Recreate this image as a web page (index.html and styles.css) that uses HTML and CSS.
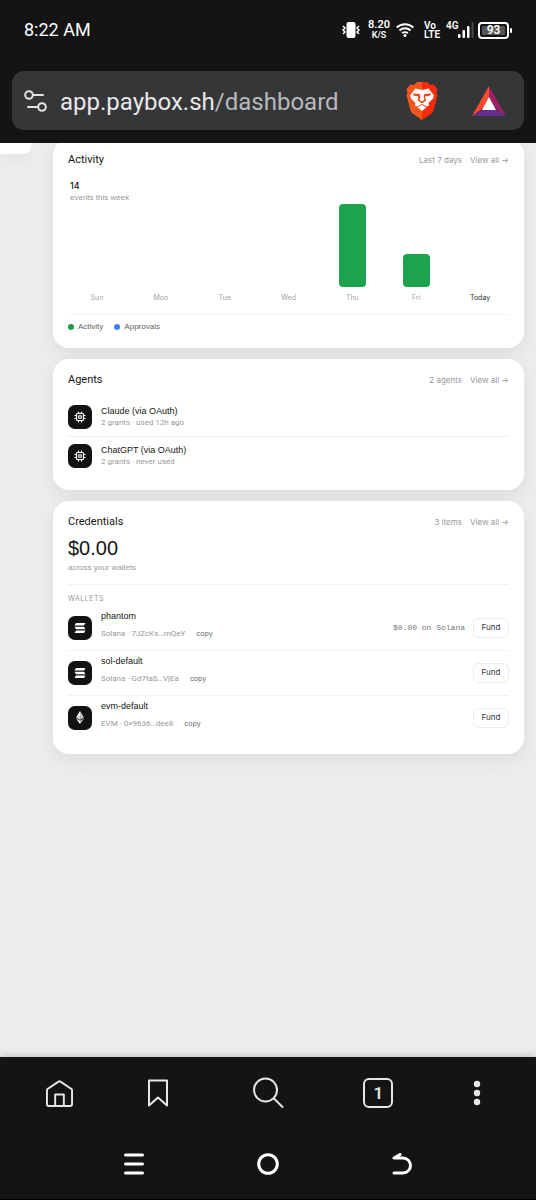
FILE: index.html
```html
<!DOCTYPE html>
<html lang="en">
<head>
<meta charset="utf-8">
<meta name="viewport" content="width=device-width, initial-scale=1">
<title>Paybox dashboard</title>
<link rel="stylesheet" href="styles.css">
</head>
<body>
<svg class="defs" aria-hidden="true">
  <symbol id="chip" viewBox="0 0 24 24"><g fill="none" stroke="#fff" stroke-width="2.4" stroke-linecap="round"><rect x="5" y="5" width="14" height="14" rx="2.5"/><rect x="9.5" y="9.5" width="5" height="5" rx=".5"/><path d="M9 5V2M15 5V2M9 22v-3M15 22v-3M5 9H2M5 15H2M22 9h-3M22 15h-3"/></g></symbol>
  <symbol id="sol" viewBox="0 0 24 20"><path fill="#fff" d="M4 0h19l-3 5H1zM1 7.500h19l3 5H4zM4 15h19l-3 5H1z"/></symbol>
  <symbol id="eth" viewBox="0 0 16 26"><path fill="#fff" d="M8 0 8 17.500 0 13zM8 19.500V26L0 15z"/><path fill="#c9c9c9" d="M8 0v17.500L16 13zM8 19.500V26l8-11z"/><path fill="#999" d="m0 13 8-3.500v8zM8 9.500l8 3.500-8 4.500z" opacity=".4"/></symbol>
</svg>
<header class="top">
  <div class="status">
    <span class="time">8:22 AM</span>
    <div class="signals">
      <svg class="vibrate" width="18" height="16" viewBox="0 0 18 16"><rect x="4.500" y="0" width="9" height="16" rx="2" fill="#fff"/><path d="M1 4l2 2-2 2 2 2-2 2M17 4l-2 2 2 2-2 2 2 2" fill="none" stroke="#fff" stroke-width="1.500"/></svg>
      <span class="speed"><b>8.20</b><b class="unit">K/S</b></span>
      <svg class="wifi" width="18" height="14" viewBox="0 0 18 14"><g fill="none" stroke="#fff" stroke-width="2"><path d="M.7 4.500a12 12 0 0 1 16.600 0M3.500 7.500a8 8 0 0 1 11 0M6.200 10.300a4 4 0 0 1 5.600 0"/></g><circle cx="9" cy="12.500" r="1.500" fill="#fff"/></svg>
      <span class="volte"><b>Vo</b><b>LTE</b></span>
      <b class="gen">4G</b>
      <svg class="bars" width="16" height="16" viewBox="0 0 16 16"><g fill="#fff"><rect y="12" width="2.500" height="4" rx="1"/><rect x="4.500" y="8" width="2.500" height="8" rx="1"/><rect x="9" y="4" width="2.500" height="12" rx="1"/></g><rect x="13.500" width="2" height="16" rx="1" fill="#48484a"/></svg>
      <span class="battery"><b>93</b></span>
    </div>
  </div>
  <div class="address">
    <svg width="24" height="22" viewBox="0 0 24 22"><g fill="none" stroke="#e3e3e4" stroke-width="2" stroke-linecap="round"><circle cx="5" cy="5" r="3.800"/><path d="M9 5h10M4 17h10"/><circle cx="18" cy="17" r="3.800"/></g></svg>
    <span class="url">app.paybox.sh<span class="path">/dashboard</span></span>
    <svg class="brave" width="32" height="38" viewBox="0 0 32 38"><defs><linearGradient id="lion"><stop offset=".5" stop-color="#f4561d"/><stop offset=".5" stop-color="#fb2b0a"/></linearGradient></defs><path fill="url(#lion)" d="M11 0h10l3 3 3.500-.5L31.500 7l-1 3.500 1 3-4 15c-1 3-3 3.500-5 5L16 38l-6.500-4.500c-2-1.500-4-2-5-5l-4-15 1-3-1-3.500 4-4.500L8 3z"/><path fill="#fff" d="m9.500 6.500 4 1q2.500.7 5 0l4-1 5.500 7-1 3-4.500 4.500.5 2.500-2 1-5-2.500-5 2.500-2-1 .5-2.500L5 16.500l-1-3z"/><g fill="#f8431a"><path d="m7 11.500 7 .5-1.500 2.500-5-1zM25 11.500l-7 .5 1.500 2.500 5-1z"/><path d="m12.500 13 1.500-.5.3 2.500-.8 3 2.500 1.600 2.500-1.600-.8-3 .3-2.500 1.500.5-.5 2 1.200 3.500L16 21.500l-4.200-3z"/></g><path fill="#fff" d="m16 23 4.500 2.200L16 29l-4.500-3.800z"/></svg>
    <svg class="bat" width="34" height="30" viewBox="0 0 34 30"><path fill="#ff4b2b" d="M17 0v11l-6 11-11 8z"/><path fill="#9e1f63" d="m17 0 17 30-11-8-6-11z"/><path fill="#662d91" d="m0 30 11-6.500h12L34 30z"/><path fill="#fff" d="m17 11 7 13H10z"/></svg>
  </div>
</header>

<div class="page">
  <aside class="side"></aside>
  <main class="cards">
    <section class="card">
      <div class="head"><h2>Activity</h2><span class="meta">Last 7 days</span><a class="all" href="#">View all →</a></div>
      <div class="total"><strong>14</strong><span>events this week</span></div>
      <div class="chart">
        <div class="day"><i class="bar" style="height:0"></i><span>Sun</span></div>
        <div class="day"><i class="bar" style="height:0"></i><span>Mon</span></div>
        <div class="day"><i class="bar" style="height:0"></i><span>Tue</span></div>
        <div class="day"><i class="bar" style="height:0"></i><span>Wed</span></div>
        <div class="day"><i class="bar" style="height:83px"></i><span>Thu</span></div>
        <div class="day"><i class="bar" style="height:33px"></i><span>Fri</span></div>
        <div class="day today"><i class="bar" style="height:0"></i><span>Today</span></div>
      </div>
      <div class="legend"><span class="key">Activity</span><span class="key blue">Approvals</span></div>
    </section>

    <section class="card">
      <div class="head"><h2>Agents</h2><span class="meta">2 agents</span><a class="all" href="#">View all →</a></div>
      <ul class="agents">
        <li class="row"><span class="tile"><svg width="12" height="12"><use href="#chip"/></svg></span><div class="info"><span class="name">Claude (via OAuth)</span><span class="sub">2 grants · used 12h ago</span></div></li>
        <li class="row"><span class="tile"><svg width="12" height="12"><use href="#chip"/></svg></span><div class="info"><span class="name">ChatGPT (via OAuth)</span><span class="sub">2 grants · never used</span></div></li>
      </ul>
    </section>

    <section class="card">
      <div class="head"><h2>Credentials</h2><span class="meta">3 items</span><a class="all" href="#">View all →</a></div>
      <div class="balance">$0.00</div>
      <div class="across">across your wallets</div>
      <h3>WALLETS</h3>
      <ul class="wallets">
        <li class="row"><span class="tile"><svg width="12" height="10"><use href="#sol"/></svg></span><div class="info"><span class="name">phantom</span><span class="sub">Solana · 7JZcKs…mQeY <button class="copy">copy</button></span></div><span class="amount">$0.00 on Solana</span><button class="fund">Fund</button></li>
        <li class="row"><span class="tile"><svg width="12" height="10"><use href="#sol"/></svg></span><div class="info"><span class="name">sol-default</span><span class="sub">Solana · Gd7taS…VjEa <button class="copy">copy</button></span></div><button class="fund">Fund</button></li>
        <li class="row"><span class="tile"><svg width="8" height="13"><use href="#eth"/></svg></span><div class="info"><span class="name">evm-default</span><span class="sub">EVM · 0×9636…dee8 <button class="copy">copy</button></span></div><button class="fund">Fund</button></li>
      </ul>
    </section>
  </main>
</div>

<footer class="bottom">
  <nav class="tools">
    <button aria-label="Home"><svg width="27" height="27" viewBox="0 0 28 28"><path d="M1 10.500Q1 9.500 2 9L13 1.700Q14 1 15 1.700L26 9q1 .5 1 1.500V25q0 2-2 2H3q-2 0-2-2zM9.500 27V15h9v12"/></svg></button>
    <button aria-label="Bookmarks"><svg width="20" height="28" viewBox="0 0 20 28"><path d="M1 1.500h18v25l-9-8-9 8z"/></svg></button>
    <button aria-label="Search"><svg width="32" height="32" viewBox="0 0 32 32"><circle cx="13.500" cy="13" r="11.500"/><path d="m22 21.500 8.500 8.500"/></svg></button>
    <button class="tabs" aria-label="Tabs"><span>1</span></button>
    <button aria-label="Menu"><svg class="dots" width="8" height="26" viewBox="0 0 8 26"><circle cx="4" cy="4" r="3.200"/><circle cx="4" cy="13" r="3.200"/><circle cx="4" cy="22" r="3.200"/></svg></button>
  </nav>
  <nav class="system">
    <button aria-label="Recent apps"><svg width="22" height="22" viewBox="0 0 22 22"><path d="M2.500 2h17M2.500 11h17M2.500 20h17"/></svg></button>
    <button aria-label="Home screen"><svg width="22" height="22" viewBox="0 0 22 22"><circle cx="11" cy="11" r="9.300"/></svg></button>
    <button aria-label="Back"><svg width="22" height="22" viewBox="0 0 22 22"><path d="M9 1.500 3 5H12a7.500 7.500 0 0 1 0 15H3"/></svg></button>
  </nav>
</footer>
</body>
</html>
```
FILE: styles.css
```css
* { box-sizing: border-box; }
body {
  margin: 0;
  min-height: 100vh;
  display: flex;
  flex-direction: column;
  background: #ededeb;
  color: #161616;
  font: 8px/12px Inter, "Liberation Sans", sans-serif;
}
h2, h3, ul { margin: 0; padding: 0; font-weight: 400; }
ul { list-style: none; }
svg { display: block; flex: none; }
button { margin: 0; padding: 0; border: 0; background: none; color: inherit; font: inherit; }
.defs { position: absolute; width: 0; height: 0; }

.top { background: #141414; color: #fff; padding: 0 12px 13px; font-family: Roboto, sans-serif; z-index: 1; }
.status { display: flex; align-items: center; height: 60px; padding: 0 12px; margin-bottom: 11px; }
.time { flex: 1; font-size: 18px; line-height: 24px; }
.signals { display: flex; align-items: center; margin-right: 3px; }
.signals b { font-weight: 600; display: block; }
.speed { margin-left: 8px; width: 22px; font-size: 11px; line-height: 10px; text-align: center; }
.unit { font-size: 9px; }
.wifi { margin-left: 6px; }
.volte { margin-left: 10px; width: 16px; font-size: 10px; line-height: 9px; }
.gen { margin: 0 0 8px 6px; width: 12px; font-size: 10px; line-height: 10px; }
.battery {
  position: relative; margin-left: 4px; width: 31px; height: 17px; padding: 2px;
  border: 2px solid #fff; border-radius: 4px; font-size: 12px; line-height: 9px; text-align: center;
}
.battery b { background: #555; border-radius: 1px; }
.battery::after { content: ""; position: absolute; right: -5px; top: 4px; width: 2px; height: 5px; background: #fff; border-radius: 1px; }
.address { display: flex; align-items: center; height: 59px; padding: 0 18px 0 12px; border-radius: 12px; background: #353638; }
.url { flex: 1; margin-left: 12px; font-size: 24px; line-height: 34px; padding-top: 2px; color: #e8e8e9; }
.path { color: #b9b9bb; }
.bat { margin-left: 34px; }

.page {
  flex: 1; display: grid; grid-template-columns: 31px minmax(0, 1fr); gap: 22px;
  align-items: start; padding-right: 12px; overflow: hidden;
}
.side { height: 11px; background: #fff; border-radius: 0 0 8px 0; box-shadow: 0 4px 16px rgba(0, 0, 0, .06); }
.cards { display: grid; gap: 11px; margin-top: -4px; }
.card { padding: 15px; border-radius: 16px; background: #fff; box-shadow: 0 6px 20px rgba(0, 0, 0, .07); }
.head { display: flex; align-items: center; gap: 8px; height: 12px; }
h2 { flex: 1; font: 11px/14px Roboto, "Liberation Sans", sans-serif; }
.meta, .all, .sub, .across, .total span { color: #999; }
.all { text-decoration: none; }
.across, .total span, .legend { font-family: "Liberation Sans", sans-serif; }
.sub { font-family: Roboto, "Liberation Sans", sans-serif; }

.total { display: flex; flex-direction: column; padding: 14px 0 0 2px; }
.total strong { font-size: 9px; font-weight: 500; }
.chart { display: grid; grid-template-columns: repeat(7, 1fr); gap: 6px; }
.day { display: flex; flex-direction: column; justify-content: flex-end; align-items: center; gap: 5px; color: #a3a3a3; font-size: 7px; }
.bar { width: 27px; border-radius: 4px; background: #1ba44b; }
.today { color: #333; }
.legend { display: flex; gap: 11px; margin-top: 10px; padding-top: 6px; border-top: 1px solid #f3f3f2; color: #666359; }
.key { display: flex; align-items: center; gap: 4px; }
.key::before { content: ""; width: 6px; height: 6px; border-radius: 50%; background: #1ba04b; }
.blue::before { background: #3f80f0; }

.agents { padding-top: 12px; }
.row { display: flex; align-items: center; }
.row + .row { border-top: 1px solid #f1f1f0; }
.agents .row { padding: 7px 0; }
.tile { display: grid; place-items: center; width: 24px; height: 24px; border-radius: 7px; background: #121212; }
.info { flex: 1; display: flex; flex-direction: column; margin-left: 9px; }
.name { font: 9px/12px "Liberation Sans", sans-serif; }

.balance { padding-top: 8px; font: 20px/24px "Liberation Sans", sans-serif; }
.across { padding: 2px 0 10px; border-bottom: 1px solid #f1f1f0; }
h3 { padding: 8px 0 1px; font-size: 7px; line-height: 12px; letter-spacing: 0.5px; color: #999; }
.wallets .row { height: 45px; }
.wallets .row:first-child, .wallets .row:last-child { height: 44px; }
.wallets .sub { display: flex; align-items: center; height: 24px; }
.copy { margin-left: 11px; font-family: Inter, sans-serif; font-size: 7px; color: #666; }
.amount { font: 8px/12px "Liberation Mono", monospace; color: #777; }
.fund { margin-left: 8px; width: 36px; height: 20px; padding-bottom: 2px; border: 1px solid #ececeb; border-radius: 6px; font-size: 8px; color: #333; }

.bottom { position: relative; background: #141414; box-shadow: 0 -1px 8px rgba(0, 0, 0, .22); border-bottom: 1px solid #000; }
.bottom button { display: grid; place-items: center; }
.bottom svg { fill: none; stroke: #e6e6e6; stroke-width: 2; stroke-linecap: round; stroke-linejoin: round; }
.tools { display: grid; grid-template-columns: 98fr 98fr 122fr 98fr 98fr; height: 72px; padding: 0 10px; }
.tabs span { width: 30px; height: 30px; border: 2px solid #e6e6e6; border-radius: 6px; color: #e6e6e6; font: 600 17px/26px Roboto, sans-serif; }
.bottom .dots { fill: #e6e6e6; stroke: none; }
.system { display: grid; grid-template-columns: repeat(3, 1fr); height: 70px; padding: 0 12.5%; }
.bottom .system svg { stroke: #fff; stroke-width: 3; }
```
